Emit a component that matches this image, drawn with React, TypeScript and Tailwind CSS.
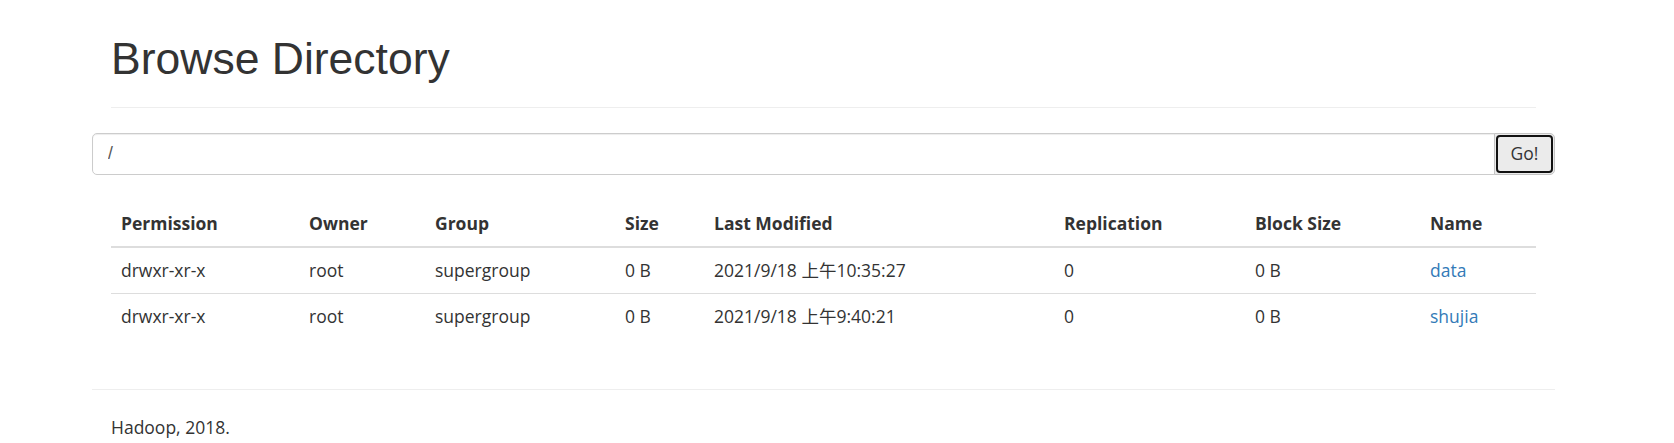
import { useState } from 'react';

const columns = [
  { label: 'Permission', w: 'w-[188px]' },
  { label: 'Owner', w: 'w-[126px]' },
  { label: 'Group', w: 'w-[190px]' },
  { label: 'Size', w: 'w-[89px]' },
  { label: 'Last Modified', w: 'w-[350px]' },
  { label: 'Replication', w: 'w-[191px]' },
  { label: 'Block Size', w: 'w-[175px]' },
  { label: 'Name', w: 'w-[116px]' },
];

const files = [
  { perm: 'drwxr-xr-x', owner: 'root', group: 'supergroup', size: '0 B', modified: '2021/9/18 上午10:35:27', repl: '0', block: '0 B', name: 'data' },
  { perm: 'drwxr-xr-x', owner: 'root', group: 'supergroup', size: '0 B', modified: '2021/9/18 上午9:40:21', repl: '0', block: '0 B', name: 'shujia' },
];

export default function App() {
  const [dir, setDir] = useState('/');

  return (
    <div
      className="min-h-[443px] bg-white text-[#333] text-[17.5px] leading-[25px]"
      style={{ fontFamily: '"Open Sans", "Noto Sans CJK SC", sans-serif' }}
    >
      <div className="ml-[92px] w-[1463px]">
        {/* Header */}
        <div className="mx-[19px] pt-[34px] pb-[11px] mb-[25px] border-b border-[#eee]">
          <h1
            className="text-[44.5px] leading-[49.5px] font-normal text-[#333] mb-[12px]"
            style={{ fontFamily: '"Liberation Sans", Arial, sans-serif' }}
          >
            Browse Directory
          </h1>
        </div>

        {/* Path input */}
        <form className="flex h-[42px]" onSubmit={(e) => e.preventDefault()}>
          <input
            type="text"
            value={dir}
            onChange={(e) => setDir(e.target.value)}
            className="flex-1 h-full px-[15px] border border-[#ccc] rounded-l-[5px] text-[#555] text-[17.5px] outline-none shadow-[inset_0_1px_1px_rgba(0,0,0,0.075)]"
            style={{ fontFamily: '"Liberation Sans", Arial, sans-serif' }}
          />
          <button
            type="button"
            className="relative w-[61px] h-full -ml-px bg-[#ebebeb] border border-[#c4c4c4] rounded-r-[5px] text-[#333] text-[17.5px] flex items-center justify-center"
          >
            <span className="absolute inset-[1px] rounded-[4px] border-2 border-[#111]" />
            Go!
          </button>
        </form>

        <div className="h-[26px]" />

        {/* Listing */}
        <div className="px-[19px]">
          <table className="w-[1425px] table-fixed border-collapse">
            <thead>
              <tr>
                {columns.map((c) => (
                  <th
                    key={c.label}
                    className={`${c.w} p-[10px] text-left font-bold border-b-2 border-[#ddd]`}
                  >
                    {c.label}
                  </th>
                ))}
              </tr>
            </thead>
            <tbody>
              {files.map((f, i) => (
                <tr key={f.name} className={i > 0 ? 'border-t border-[#ddd]' : ''}>
                  <td className="p-[10px]">{f.perm}</td>
                  <td className="p-[10px]">{f.owner}</td>
                  <td className="p-[10px]">{f.group}</td>
                  <td className="p-[10px]">{f.size}</td>
                  <td className="p-[10px]">{f.modified}</td>
                  <td className="p-[10px]">{f.repl}</td>
                  <td className="p-[10px]">{f.block}</td>
                  <td className="p-[10px]">
                    <a href="#" className="text-[#337ab7]">{f.name}</a>
                  </td>
                </tr>
              ))}
            </tbody>
          </table>
        </div>

        {/* Footer */}
        <hr className="border-t border-[#eee] mt-[50px] mb-[25px]" />
        <p className="px-[19px]">Hadoop, 2018.</p>
      </div>
    </div>
  );
}
